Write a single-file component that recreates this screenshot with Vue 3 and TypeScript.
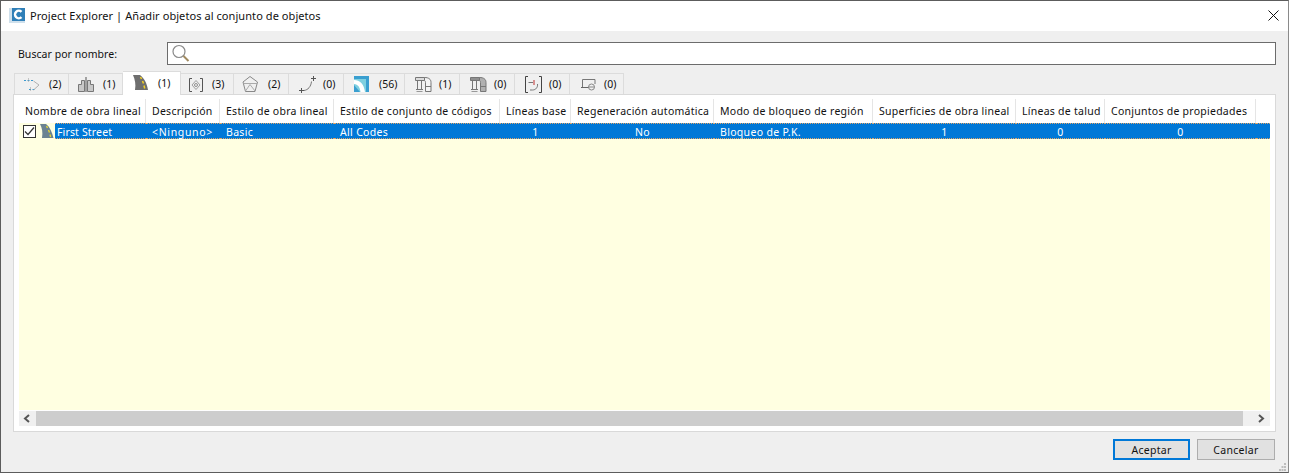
<script setup lang="ts">
interface Tab { kind: string; count: string; width: number; gap: number; active?: boolean }
const tabs: Tab[] = [
  { kind: 'align', count: '(2)', width: 55, gap: 6 },
  { kind: 'profile', count: '(1)', width: 54, gap: 6 },
  { kind: 'road', count: '(1)', width: 58, gap: 7, active: true },
  { kind: 'target', count: '(3)', width: 53, gap: 3 },
  { kind: 'pent', count: '(2)', width: 55, gap: 6 },
  { kind: 'curve', count: '(0)', width: 55, gap: 6 },
  { kind: 'corner', count: '(56)', width: 61, gap: 7 },
  { kind: 'pipe', count: '(1)', width: 55, gap: 6 },
  { kind: 'pipe2', count: '(0)', width: 55, gap: 6 },
  { kind: 'bracket', count: '(0)', width: 55, gap: 6 },
  { kind: 'view', count: '(0)', width: 54, gap: 6 }
]
const columns = [
  { label: 'Nombre de obra lineal', width: 127 },
  { label: 'Descripción', width: 74 },
  { label: 'Estilo de obra lineal', width: 114 },
  { label: 'Estilo de conjunto de códigos', width: 166 },
  { label: 'Líneas base', width: 71 },
  { label: 'Regeneración automática', width: 143 },
  { label: 'Modo de bloqueo de región', width: 159 },
  { label: 'Superficies de obra lineal', width: 143 },
  { label: 'Líneas de talud', width: 89 },
  { label: 'Conjuntos de propiedades', width: 151 }
]
const cells = [
  { text: '<Ninguno>', width: 74, center: false, wide: true },
  { text: 'Basic', width: 114, center: false, wide: false },
  { text: 'All Codes', width: 166, center: false, wide: false },
  { text: '1', width: 71, center: true, wide: false },
  { text: 'No', width: 143, center: true, wide: false },
  { text: 'Bloqueo de P.K.', width: 159, center: false, wide: false },
  { text: '1', width: 143, center: true, wide: false },
  { text: '0', width: 89, center: true, wide: false },
  { text: '0', width: 151, center: true, wide: false }
]
</script>

<template>
  <div class="win">
    <header class="title">
      <svg class="logo" width="16" height="16" viewBox="0 0 16 16">
        <rect x="0" y="0" width="16" height="15" fill="#cfe0ec" />
        <rect x="3" y="0" width="13" height="13" fill="#2f7fb8" />
        <path d="M12.500 3.800 A3.800 3.800 0 1 0 12.500 9.200" fill="none" stroke="#fff" stroke-width="2.400" />
      </svg>
      <span class="title-text">Project Explorer | Añadir objetos al conjunto de objetos</span>
      <svg class="close" width="11" height="11" viewBox="0 0 11 11">
        <path d="M.5.5l10 10M10.500.5l-10 10" stroke="#111" stroke-width="1" fill="none" />
      </svg>
    </header>

    <div class="search">
      <label class="search-label">Buscar por nombre:</label>
      <div class="search-box">
        <svg width="20" height="19" viewBox="0 0 20 19">
          <circle cx="8" cy="7.500" r="6" fill="#fff" stroke="#8a8a8a" stroke-width="1.200" />
          <path d="M12.500 12l5 5" stroke="#a08a60" stroke-width="2" />
        </svg>
      </div>
    </div>

    <nav class="tabs">
      <div
        v-for="t in tabs"
        :key="t.kind"
        class="tab"
        :class="{ active: t.active }"
        :style="{ width: t.width + 'px' }"
      >
        <svg class="tab-icon" width="20" height="18" viewBox="0 0 20 18">
          <template v-if="t.kind === 'align'">
            <path d="M1 5.500h2M4.500 5.500h2M8 5.500h2M6 14.500h2M9.500 14.500h2" stroke="#3a9ad0" fill="none" />
            <path d="M5.500 3.500v4M7.500 12.500v4" stroke="#999" fill="none" stroke-dasharray="1 1" />
            <path d="M10.500 6l5.500 4-5.500 5" stroke="#b0b0b0" fill="none" />
          </template>
          <template v-else-if="t.kind === 'profile'">
            <path d="M1.500 16.500V9.500h3v-4h3v11zM10.500 5.500h3v4h3v7h-6z" fill="#c8c8c8" stroke="#777" />
            <path d="M9 2v15" stroke="#555" fill="none" />
          </template>
          <template v-else-if="t.kind === 'road'">
            <path d="M2 1h7c4 3 7 8 8 15H4C5 10 4 6 2 1z" fill="#6e6e6e" />
            <path d="M9.500 3l1 2M11.500 7l1 2.500M13 11.500l.7 3" stroke="#f2d024" stroke-width="1.500" fill="none" />
          </template>
          <template v-else-if="t.kind === 'target'">
            <path d="M3 3.500H.5v13H3M11 3.500h2.500v13H11" stroke="#555" fill="none" />
            <path d="M7 5.500l4 4.500-4 4.500L3 10z" fill="none" stroke="#a0a0a0" />
            <circle cx="7" cy="10" r="1.500" fill="none" stroke="#777" stroke-width=".8" />
          </template>
          <template v-else-if="t.kind === 'pent'">
            <path d="M8 1.500l7.500 5.500-2.500 9.500H3.500L1 7z" fill="none" stroke="#888" />
            <path d="M1.500 8.500h13.500M8 9.500L3.500 16M8 9.500l5 6.500" stroke="#aaa" fill="none" />
          </template>
          <template v-else-if="t.kind === 'curve'">
            <path d="M7 15.500c4-.5 7-4 7.500-9" stroke="#777" fill="none" />
            <path d="M14 3.500h5M16.500 1v5M2 15.500h5M4.500 13v5" stroke="#555" fill="none" />
          </template>
          <template v-else-if="t.kind === 'corner'">
            <path d="M2 1h15v16H2z" fill="#7fd0e0" />
            <path d="M2 1h15v3H2zM14 4h3v13h-3z" fill="#3a9fd0" />
            <path d="M2 5c6 0 10 4 11 12H8.500C8 12 6 9.500 2 9z" fill="#fff" />
            <path d="M2 10l6 7H2z" fill="#3a9fd0" />
          </template>
          <template v-else-if="t.kind === 'pipe' || t.kind === 'pipe2'">
            <path d="M2.500 2.500h9v3h-9z" :fill="t.kind === 'pipe2' ? '#8f8f8f' : '#dcdcdc'" stroke="#777" />
            <path d="M4.500 5.500v9M8.500 5.500v9M3 14.500h7" stroke="#777" fill="none" />
            <path d="M3.500 16.500h6" stroke="#999" fill="none" />
            <path d="M11.500 2.500c4 0 6.500 1.500 6.500 5v9h-5.500v-9c0-1-.5-2-1-2z" :fill="t.kind === 'pipe2' ? '#b0b0b0' : '#f4f4f4'" stroke="#777" />
            <path d="M12.500 11.500h5.500" stroke="#777" />
          </template>
          <template v-else-if="t.kind === 'bracket'">
            <path d="M5 1.500H2.500v16H5M16 1.500h2.500v16H16" stroke="#444" fill="none" />
            <path d="M5.500 7.500H10" stroke="#777" fill="none" />
            <path d="M11 5v5" stroke="#c03030" fill="none" />
            <path d="M14.500 9c.5 3-1.500 6-5 6H7" stroke="#777" fill="none" />
          </template>
          <template v-else>
            <path d="M4.500 12V4.500H17V9" stroke="#777" fill="none" />
            <path d="M3 12.500h8" stroke="#666" fill="none" />
            <circle cx="13.500" cy="12" r="3" fill="none" stroke="#888" />
            <path d="M11 12h5" stroke="#888" fill="none" />
          </template>
        </svg>
        <span class="count" :style="{ marginLeft: t.gap + 'px' }">{{ t.count }}</span>
      </div>
    </nav>

    <section class="panel">
      <div class="head">
        <div v-for="c in columns" :key="c.label" class="hcell" :style="{ width: c.width + 'px' }">{{ c.label }}</div>
      </div>
      <div class="body">
        <div class="row">
          <div class="first" :style="{ width: '127px' }">
            <span class="check">
              <svg width="11" height="11" viewBox="0 0 11 11">
                <path d="M1 5.500l3 3 6-7" stroke="#333" stroke-width="1.200" fill="none" />
              </svg>
            </span>
            <svg class="row-icon" width="16" height="16" viewBox="0 0 16 16">
              <path d="M1 1h6c4 3 6 8 7.500 14H3C4 9 3 5 1 1z" fill="#6b8391" />
              <path d="M7.500 3l1 2M9.500 7l1 2.500M11 11.500l.6 2.500" stroke="#e8d830" stroke-width="1.300" fill="none" />
            </svg>
            <span class="sel-name">First Street</span>
          </div>
          <div
            v-for="(c, i) in cells"
            :key="i"
            class="cell"
            :class="{ center: c.center, wide: c.wide }"
            :style="{ width: c.width + 'px' }"
          >{{ c.text }}</div>
          <div class="row-fill"></div>
        </div>
        <div class="empty"></div>
        <div class="scroll">
          <svg class="arrow left" width="8" height="9" viewBox="0 0 8 9">
            <path d="M6 1L2 4.500 6 8" stroke="#555" stroke-width="2" fill="none" />
          </svg>
          <div class="thumb"></div>
          <svg class="arrow right" width="8" height="9" viewBox="0 0 8 9">
            <path d="M2 1l4 3.500L2 8" stroke="#555" stroke-width="2" fill="none" />
          </svg>
        </div>
      </div>
    </section>

    <footer class="foot">
      <button class="btn primary">Aceptar</button>
      <button class="btn">Cancelar</button>
    </footer>
    <svg class="grip" width="8" height="8" viewBox="0 0 8 8">
      <path d="M5 0h2v2H5zM2.500 3h2v2h-2zM5 3h2v2H5zM0 6h2v2H0zM2.500 6h2v2h-2zM5 6h2v2H5z" fill="#bdbdbd" />
    </svg>
  </div>
</template>

<style scoped>
.win {
  position: relative;
  width: 1289px;
  height: 473px;
  box-sizing: border-box;
  overflow: hidden;
  background: #efefef;
  border: 1px solid #5c5c5c;
  border-right-color: #8a8a8a;
  font-family: "Noto Sans", "Open Sans", sans-serif;
  font-size: 10.5px;
  letter-spacing: 0.32px;
  color: #111;
  display: flex;
  flex-direction: column;
}
.title {
  height: 30px;
  flex: none;
  background: #fff;
  display: flex;
  align-items: center;
  padding: 0 9px 0 8px;
}
.logo { flex: none; }
.title-text {
  margin: -1px 0 0 5px;
  font-size: 11px;
  letter-spacing: 0.07px;
  flex: 1;
}
.close { margin-top: -1px; }
.search {
  height: 23px;
  margin-top: 11px;
  display: flex;
  align-items: center;
  padding-left: 17px;
  flex: none;
}
.search-label {
  width: 149px;
  flex: none;
  letter-spacing: 0.05px;
}
.search-box {
  width: 1109px;
  height: 23px;
  box-sizing: border-box;
  background: #fff;
  border: 1px solid #6c6c6c;
  display: flex;
  align-items: center;
  padding-left: 3px;
}
.tabs {
  display: flex;
  align-items: flex-end;
  height: 22px;
  margin-top: 7px;
  padding-left: 13px;
  flex: none;
}
.tab {
  box-sizing: border-box;
  height: 21px;
  flex: none;
  background: #f0f0f0;
  border: 1px solid #dcdcdc;
  border-left: 0;
  border-bottom: 0;
  display: flex;
  align-items: center;
  padding-left: 8px;
  position: relative;
}
.tab:first-child { border-left: 1px solid #dcdcdc; }
.tab.active {
  height: 24px;
  background: #fff;
  margin-bottom: -1px;
  z-index: 1;
  padding-bottom: 2px;
}
.tab-icon { flex: none; }
.count {
  letter-spacing: 0;
  font-size: 10.5px;
}
.panel {
  margin: 0 0 0 12px;
  width: 1263px;
  height: 338px;
  box-sizing: border-box;
  background: #fff;
  border: 1px solid #d9d9d9;
  padding: 4px 5px 5px;
  display: flex;
  flex-direction: column;
  flex: none;
}
.head {
  height: 24px;
  display: flex;
  flex: none;
}
.hcell {
  box-sizing: border-box;
  flex: none;
  border-right: 1px solid #e5e5e5;
  padding-left: 6px;
  line-height: 24px;
  letter-spacing: 0.26px;
  white-space: nowrap;
  overflow: hidden;
}
.body {
  flex: 1;
  display: flex;
  flex-direction: column;
  background: #fff;
}
.row {
  height: 16px;
  display: flex;
  flex: none;
  color: #fff;
  line-height: 16px;
}
.first {
  flex: none;
  display: flex;
  align-items: center;
  background: #ffffe1;
}
.check {
  margin-left: 4px;
  width: 13px;
  height: 13px;
  box-sizing: border-box;
  border: 1px solid #333;
  background: #fff;
  display: flex;
  align-items: center;
  justify-content: center;
  flex: none;
}
.row-icon {
  margin-left: 3px;
  flex: none;
}
.sel-name {
  flex: 1;
  align-self: stretch;
  background: #0078d7;
  padding-left: 2px;
  box-sizing: border-box;
  border-top: 1px dotted #e0a56a;
  border-bottom: 1px dotted #e0a56a;
  line-height: 16px;
  letter-spacing: 0.15px;
}
.cell, .row-fill {
  box-sizing: border-box;
  flex: none;
  background: #0078d7;
  border-top: 1px dotted #e0a56a;
  border-bottom: 1px dotted #e0a56a;
  padding-left: 6px;
  line-height: 16px;
  white-space: pre;
}
.cell.wide { letter-spacing: 0.65px; }
.cell.center {
  text-align: center;
  padding-left: 0;
}
.row-fill {
  flex: 1;
  padding: 0;
}
.empty {
  flex: 1;
  background: #ffffe1;
  margin-bottom: 1px;
}
.scroll {
  height: 15px;
  flex: none;
  display: flex;
  align-items: center;
  background: #f0f0f0;
}
.arrow { flex: none; }
.arrow.left { margin: 0 5px 0 4px; }
.arrow.right { margin: 0 5px 0 14px; }
.thumb {
  width: 1207px;
  height: 15px;
  background: #cdcdcd;
  flex: none;
}
.foot {
  display: flex;
  justify-content: flex-end;
  align-items: flex-start;
  gap: 7px;
  padding: 7px 13px 0 0;
}
.btn {
  width: 78px;
  height: 21px;
  box-sizing: border-box;
  background: #e1e1e1;
  border: 1px solid #adadad;
  font: inherit;
  letter-spacing: 0.3px;
  color: #111;
  padding: 0;
}
.btn.primary {
  width: 77px;
  border: 2px solid #0078d7;
}
.grip {
  position: absolute;
  right: 1px;
  bottom: 1px;
}
</style>
